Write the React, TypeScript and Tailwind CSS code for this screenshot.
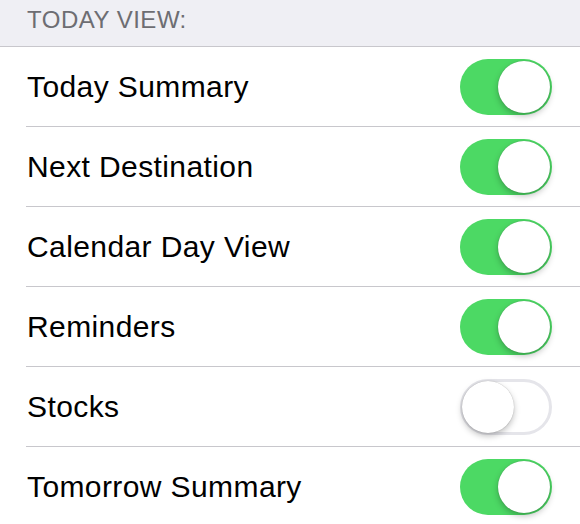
import { useState } from "react";

const items = [
  { label: "Today Summary", on: true },
  { label: "Next Destination", on: true },
  { label: "Calendar Day View", on: true },
  { label: "Reminders", on: true },
  { label: "Stocks", on: false },
  { label: "Tomorrow Summary", on: true },
];

function Toggle({ on, onClick }: { on: boolean; onClick: () => void }) {
  return (
    <button
      onClick={onClick}
      className={`relative w-[92px] h-[56px] rounded-full transition-colors ${
        on ? "bg-[#4cd964]" : "bg-white border-[3px] border-[#e5e5ea]"
      }`}
    >
      <span
        className={`absolute top-1/2 -translate-y-1/2 w-[52px] h-[52px] rounded-full bg-white shadow-[0_3px_6px_rgba(0,0,0,0.25),0_0_1px_rgba(0,0,0,0.3)] ${
          on ? "right-[2px]" : "left-[-1px]"
        }`}
      />
    </button>
  );
}

export default function App() {
  const [state, setState] = useState(items.map((i) => i.on));

  return (
    <main className="w-[580px] h-[524px] overflow-hidden bg-white font-['Liberation_Sans',Arial,sans-serif]">
      <header className="h-[47px] bg-[#efeff4] border-b border-[#c8c7cc] pl-[27px] pt-[6px]">
        <p className="text-[24px] leading-[28px] tracking-[0.5px] text-[#6d6d72]">TODAY VIEW:</p>
      </header>

      <ul className="pl-[26px]">
        {items.map((item, i) => (
          <li
            key={item.label}
            className="h-[80px] flex items-center justify-between pr-[28px] border-b border-[#c8c7cc]"
          >
            <span className="pl-[1px] text-[30px] tracking-[0.4px] text-black">{item.label}</span>
            <Toggle
              on={state[i]}
              onClick={() => setState((s) => s.map((v, j) => (j === i ? !v : v)))}
            />
          </li>
        ))}
      </ul>
    </main>
  );
}
